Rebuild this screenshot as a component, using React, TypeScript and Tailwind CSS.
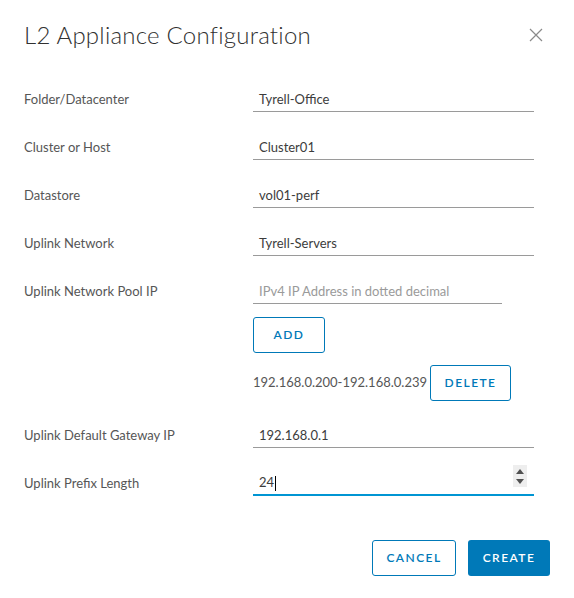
import React from "react";

const font = { fontFamily: "Lato, 'Open Sans', sans-serif" };

type FieldProps = {
  label: string;
  value?: string;
  placeholder?: string;
  narrow?: boolean;
};

function Field({ label, value, placeholder, narrow }: FieldProps) {
  return (
    <div className="flex h-12 items-center">
      <label className="w-[229px] shrink-0 text-[13px] text-[#565656]">{label}</label>
      <div
        className={`flex h-6 items-center border-b border-[#9a9a9a] pl-[6px] text-[13px] ${
          narrow ? "w-[249px]" : "w-[281px]"
        }`}
      >
        {value ? (
          <span className="text-[#3c3c3c]">{value}</span>
        ) : (
          <span className="text-[#9a9a9a]">{placeholder}</span>
        )}
      </div>
    </div>
  );
}

function OutlineButton({ children, className = "" }: { children: React.ReactNode; className?: string }) {
  return (
    <button
      className={`flex h-9 items-center justify-center rounded-[3px] border border-[#0079b8] bg-white text-[12px] font-semibold uppercase tracking-[0.12em] text-[#0079b8] ${className}`}
    >
      {children}
    </button>
  );
}

export default function App() {
  return (
    <div className="h-[598px] w-[574px] bg-white px-6 pt-[18px]" style={font}>
      <div className="flex h-[34px] items-center justify-between">
        <h1 className="text-[24px] font-light tracking-[0.01em] text-[#313131]">L2 Appliance Configuration</h1>
        <button className="mr-[6px] flex h-4 w-4 items-center justify-center">
          <svg width="14" height="14" viewBox="0 0 14 14" fill="none">
            <path d="M1 1L13 13M13 1L1 13" stroke="#8a8a8a" strokeWidth="1.2" />
          </svg>
        </button>
      </div>

      <div className="mt-6">
        <Field label="Folder/Datacenter" value="Tyrell-Office" />
        <Field label="Cluster or Host" value="Cluster01" />
        <Field label="Datastore" value="vol01-perf" />
        <Field label="Uplink Network" value="Tyrell-Servers" />
        <Field label="Uplink Network Pool IP" placeholder="IPv4 IP Address in dotted decimal" narrow />

        <div className="ml-[229px] mt-px">
          <OutlineButton className="w-[72px]">Add</OutlineButton>
          <div className="mt-3 flex items-center gap-[3px]">
            <span className="text-[13px] text-[#565656]">192.168.0.200-192.168.0.239</span>
            <OutlineButton className="w-[81px]">Delete</OutlineButton>
          </div>
        </div>

        <div className="mt-[11px]">
          <Field label="Uplink Default Gateway IP" value="192.168.0.1" />
          <div className="flex h-12 items-center">
            <label className="w-[229px] shrink-0 text-[13px] text-[#565656]">Uplink Prefix Length</label>
            <div className="relative flex h-6 w-[281px] items-center border-b-2 border-[#0095d3] pl-[6px] text-[13px]">
              <span className="text-[#3c3c3c]">24</span>
              <span className="ml-px h-[15px] w-px bg-black" />
              <div className="absolute right-[7px] top-[-7px] flex h-[22px] w-[14px] flex-col items-center justify-center gap-[5px] bg-[#eeeeee]">
                <svg width="8" height="5" viewBox="0 0 8 5">
                  <path d="M0 5L4 0L8 5Z" fill="#505050" />
                </svg>
                <svg width="8" height="5" viewBox="0 0 8 5">
                  <path d="M0 0L4 5L8 0Z" fill="#505050" />
                </svg>
              </div>
            </div>
          </div>
        </div>
      </div>

      <div className="mt-8 flex justify-end gap-3">
        <OutlineButton className="w-[84px]">Cancel</OutlineButton>
        <button className="flex h-9 w-[82px] items-center justify-center rounded-[3px] bg-[#0079b8] text-[12px] font-semibold uppercase tracking-[0.12em] text-white">
          Create
        </button>
      </div>
    </div>
  );
}
